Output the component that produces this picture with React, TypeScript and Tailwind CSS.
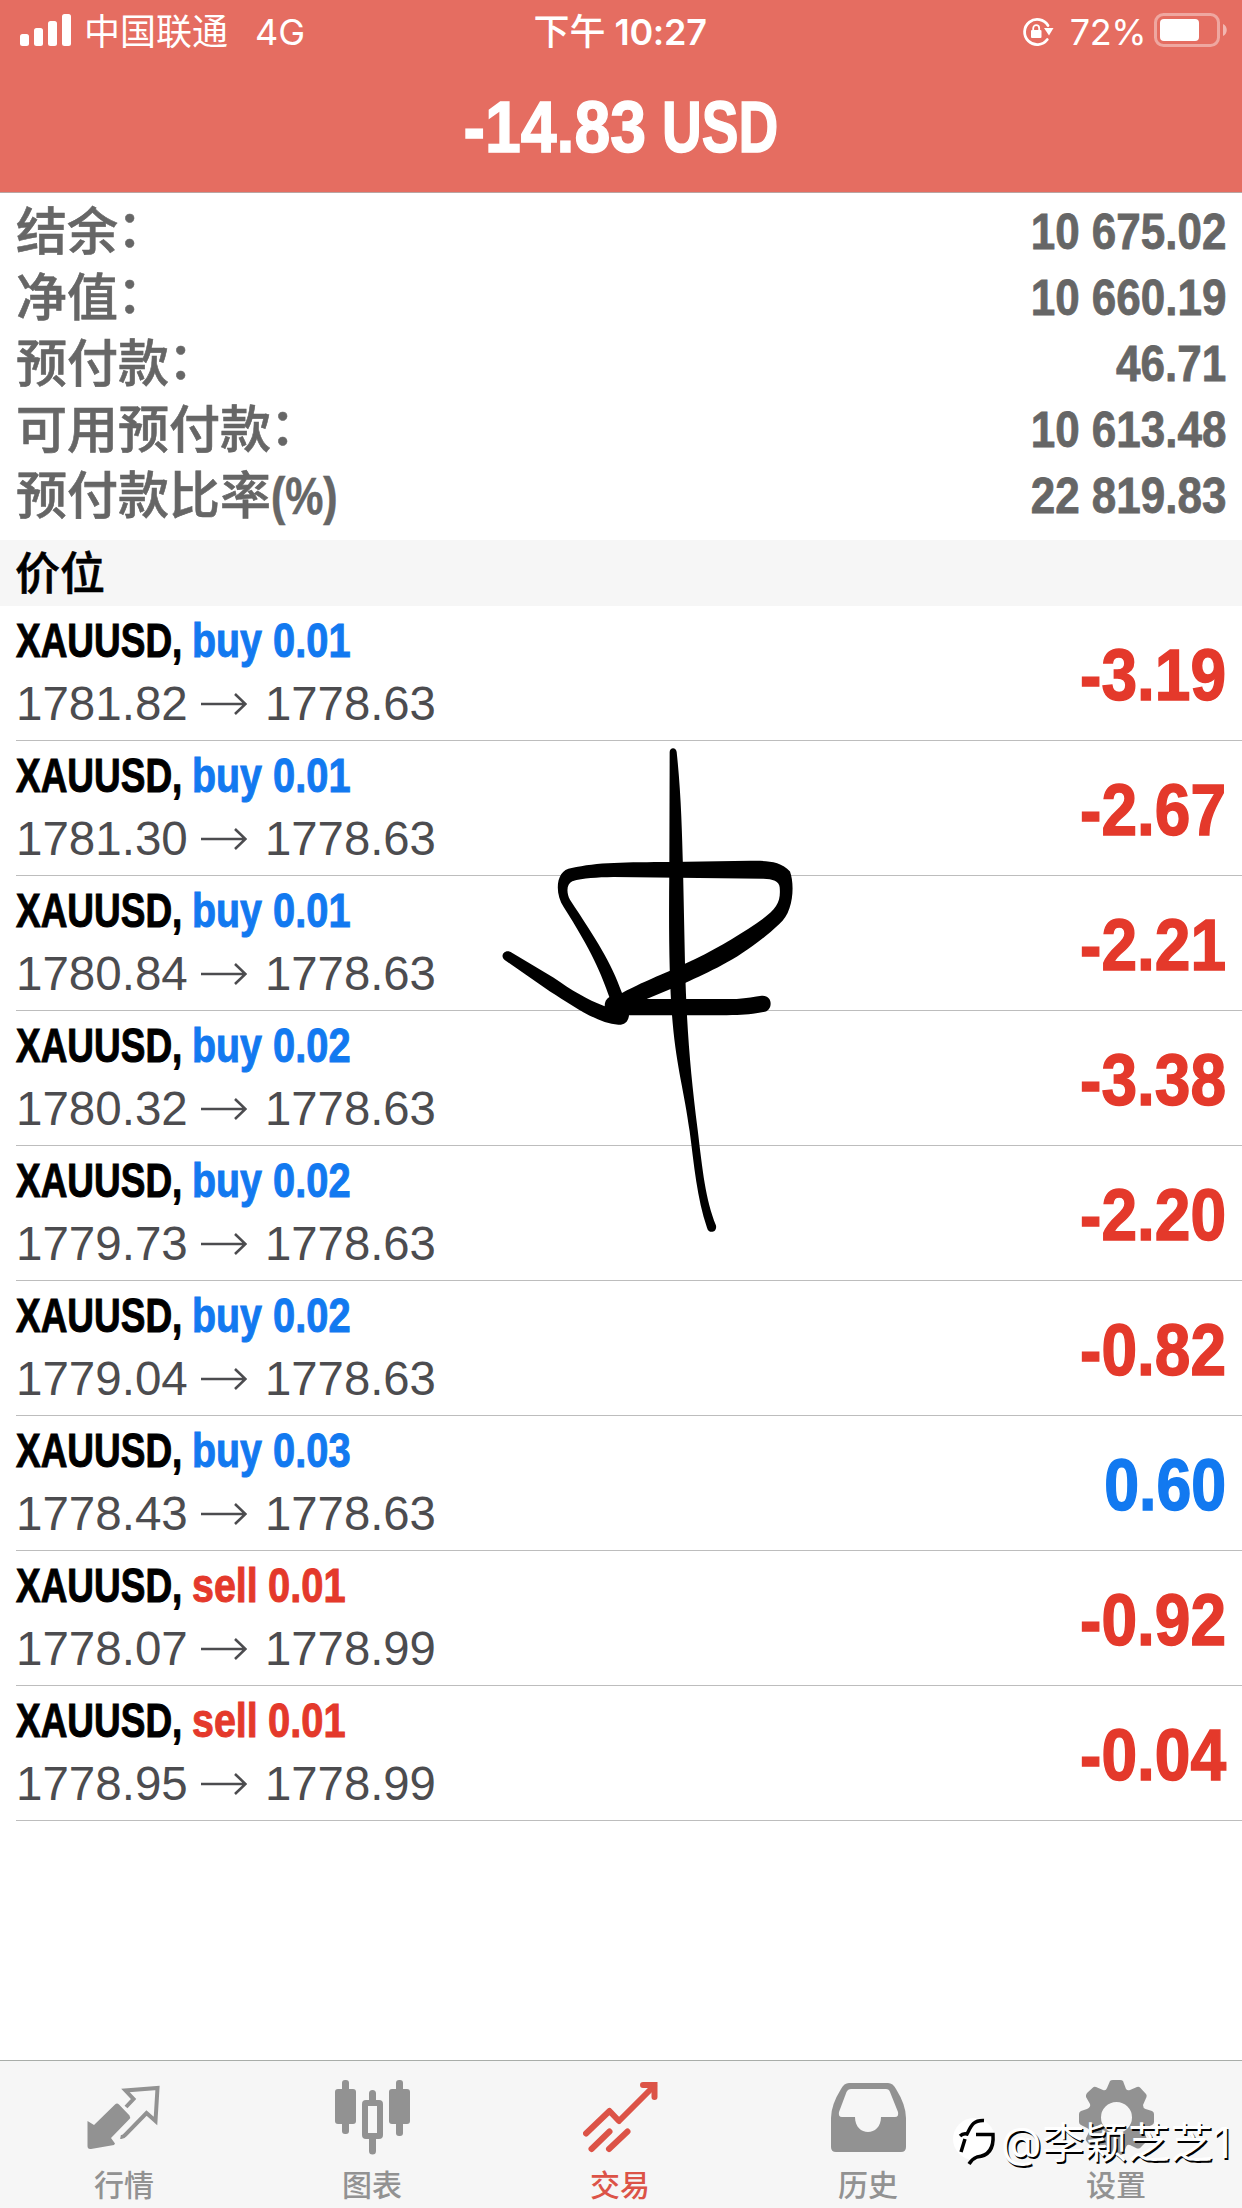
import React from 'react';

interface Position {
  side: 'buy' | 'sell';
  lots: string;
  open: string;
  current: string;
  profit: string;
}

const account = [
  { label: '结余', suffix: '：', value: '10 675.02' },
  { label: '净值', suffix: '：', value: '10 660.19' },
  { label: '预付款', suffix: '：', value: '46.71' },
  { label: '可用预付款', suffix: '：', value: '10 613.48' },
  { label: '预付款比率', suffix: '(%)', value: '22 819.83' },
];

const positions: Position[] = [
  { side: 'buy', lots: '0.01', open: '1781.82', current: '1778.63', profit: '-3.19' },
  { side: 'buy', lots: '0.01', open: '1781.30', current: '1778.63', profit: '-2.67' },
  { side: 'buy', lots: '0.01', open: '1780.84', current: '1778.63', profit: '-2.21' },
  { side: 'buy', lots: '0.02', open: '1780.32', current: '1778.63', profit: '-3.38' },
  { side: 'buy', lots: '0.02', open: '1779.73', current: '1778.63', profit: '-2.20' },
  { side: 'buy', lots: '0.02', open: '1779.04', current: '1778.63', profit: '-0.82' },
  { side: 'buy', lots: '0.03', open: '1778.43', current: '1778.63', profit: '0.60' },
  { side: 'sell', lots: '0.01', open: '1778.07', current: '1778.99', profit: '-0.92' },
  { side: 'sell', lots: '0.01', open: '1778.95', current: '1778.99', profit: '-0.04' },
];

const StatusBar = () => (
  <div className="h-16 flex items-center justify-between pl-5 pr-[14px] font-['Inter','Noto_Sans_CJK_SC',sans-serif] text-[36px] leading-none">
    <div className="flex-1 flex items-center">
      <svg className="-mt-1" width="51" height="33" viewBox="0 0 51 33" fill="white">
        <rect x="0" y="20" width="9" height="12" rx="2.5" />
        <rect x="14" y="14" width="9" height="18" rx="2.5" />
        <rect x="28" y="7" width="9" height="25" rx="2.5" />
        <rect x="42" y="0" width="9" height="32" rx="2.5" />
      </svg>
      <span className="ml-[13px] font-normal">中国联通</span>
      <span className="ml-[27px]">4G</span>
    </div>
    <div className="mr-2 flex items-center font-medium">
      下午<span className="ml-[9px] font-semibold tracking-[-0.3px]">10:27</span>
    </div>
    <div className="flex-1 flex items-center justify-end">
      <svg width="32" height="30" viewBox="0 0 32 30" fill="none" stroke="white" strokeWidth="2.8">
        <path d="M26 8.5A12.6 12.6 0 1 0 25.3 22.5" strokeLinecap="round" />
        <path d="M22 11h9.5L27 18.5z" fill="white" stroke="none" />
        <rect x="9" y="13" width="10.5" height="8" rx="1" fill="white" stroke="none" />
        <path d="M11.2 14v-2.800a3 3 0 0 1 6 0V14" strokeWidth="1.8" />
      </svg>
      <span className="ml-4 tracking-[-0.5px]">72%</span>
      <svg className="-mt-1 ml-2" width="74" height="34" viewBox="0 0 74 34">
        <rect x="1.500" y="1.500" width="63" height="31" rx="8" fill="none" stroke="white" strokeOpacity=".4" strokeWidth="3" />
        <rect x="6" y="6" width="39" height="22" rx="4" fill="white" />
        <path d="M69 11c5 2 5 10 0 12z" fill="white" fillOpacity=".5" />
      </svg>
    </div>
  </div>
);

const PositionRow = ({ position }: { position: Position }) => (
  <div className="ml-4 h-[135px] pr-4 border-b border-[#bdbdbd] flex items-center justify-between">
    <div className="flex flex-col">
      <div className="-mt-px flex text-[48px] leading-[62px] font-bold">
        <div className="w-[176px] whitespace-nowrap">
          <span className="inline-block origin-left scale-x-[.77] [-webkit-text-stroke:1px_currentColor]">XAUUSD,</span>
        </div>
        <div className={position.side === 'buy' ? 'flex text-[#1279f0]' : 'flex text-[#e4392b]'}>
          <div className={position.side === 'buy' ? 'w-[81px]' : 'w-[76px]'}>
            <span className="inline-block origin-left scale-x-[.82] [-webkit-text-stroke:1px_currentColor]">{position.side}</span>
          </div>
          <span className="inline-block origin-left scale-x-[.83] [-webkit-text-stroke:1px_currentColor]">{position.lots}</span>
        </div>
      </div>
      <div className="mt-px flex items-center text-[48px] leading-[62px] text-[#4c4c4f]">
        <span className="origin-left scale-x-[.99]">{position.open}</span>
        <svg className="ml-[11px] mr-[18px]" width="46" height="22" viewBox="0 0 46 22" fill="none" stroke="currentColor" strokeWidth="2.600">
          <path d="M0 11H44M34 1L44.500 11L34 21" />
        </svg>
        <span className="origin-left scale-x-[.985]">{position.current}</span>
      </div>
    </div>
    <span
      className={
        position.profit.startsWith('-')
          ? 'mt-[4px] origin-right scale-x-[.89] text-[72px] leading-none font-bold text-[#e4392b] [-webkit-text-stroke:1.5px_currentColor]'
          : 'mt-[4px] origin-right scale-x-[.87] text-[72px] leading-none font-bold text-[#1279f0] [-webkit-text-stroke:1.5px_currentColor]'
      }
    >
      {position.profit}
    </span>
  </div>
);

// Freehand mark over the list
const Scribble = () => (
  <svg className="absolute left-[480px] top-[720px]" width="340" height="540" viewBox="0 0 1020 1568" preserveAspectRatio="none">
    <path d="M569 93C569 78 589 78 590 93C603 210 606 320 609 430L615 710C620 900 632 1030 653 1190C668 1310 676 1390 708 1468C712 1488 686 1494 681 1474C651 1390 642 1290 629 1195C613 1080 590 1010 578 880C567 760 566 600 568 430Z" />
    <path d="M388 804C365 740 335 670 251 543C222 500 228 435 275 430C350 412 440 413 570 412L810 409C850 409 900 406 930 440C945 480 940 560 898 592C790 690 700 725 615 764L500 810H770C800 809 825 803 845 801C880 798 880 845 850 848C800 856 790 857 740 857H447C445 879 430 886 415 885C350 880 280 830 210 788L74 697C58 684 75 665 92 674L220 748C275 785 320 812 374 831C374 818 378 810 388 804ZM426 793C510 750 555 737 615 708C700 670 760 635 830 590C890 550 903 530 899 486C898 469 878 461 850 461L400 456C350 457 310 459 277 468C260 475 258 500 270 522C350 640 392 700 426 793Z" fillRule="evenodd" />
  </svg>
);

const QuotesIcon = () => (
  <svg width="75" height="75" viewBox="0 0 75 75" fill="currentColor">
    <path d="M.5 41L7 45L28 24.500Q30 22.500 32 24.500L42.500 35.500Q44 37.500 42 39.500L24 58L28 63.500L27 65L4 69Q.5 69.500 .5 66Z" />
    <path d="M39 27L46.500 19L38.500 10.500L70.500 8L68.500 41L59.500 33L38 55Q36 57.500 33.500 57" fill="none" stroke="currentColor" strokeWidth="4" />
  </svg>
);

const ChartIcon = () => (
  <svg width="75" height="75" viewBox="0 0 75 75" fill="currentColor">
    <rect x="0" y="9" width="21" height="35" rx="3" />
    <rect x="7" y="0" width="7" height="54" rx="3" />
    <rect x="54" y="9" width="21" height="35" rx="3" />
    <rect x="61" y="0" width="7" height="56" rx="3" />
    <rect x="30" y="23" width="15" height="33" rx="1" fill="none" stroke="currentColor" strokeWidth="6" />
    <path d="M34 22V13.500a3.500 3.500 0 0 1 7 0V22zM34 57V71a3.500 3.500 0 0 0 7 0V57z" />
  </svg>
);

const TradeIcon = () => (
  <svg width="75" height="75" viewBox="0 0 75 75" fill="none" stroke="currentColor" strokeWidth="6" strokeLinecap="round">
    <path d="M3 53.500L26.500 31L36 41L71 6" strokeLinejoin="round" />
    <path d="M60 5H71.500V17" />
    <path d="M8.500 69L26.500 51.500M26 69L44.500 51.500" />
  </svg>
);

const HistoryIcon = () => (
  <svg width="75" height="75" viewBox="0 0 75 75" fill="currentColor">
    <path fillRule="evenodd" d="M10 9Q13 3 18 3H57Q62 3 65 9Q75 25 75 38V67Q75 72 70 72H5Q0 72 0 67V38Q0 25 10 9ZM20 9Q17 9 15.500 12L8 32Q7 37 11 37H24C24 57 50 57 50 37H64Q68 37 67 32L59 12Q58 9 55 9Z" />
  </svg>
);

const SettingsIcon = () => (
  <svg width="75" height="75" viewBox="0 0 75 75" fill="currentColor">
    <path fillRule="evenodd" d="M31 1Q32 0 34 0H41Q43 0 44 1L47 9Q48.500 11 51 10L58 7Q60 6.500 61 7.500L67 14Q68 15 67.500 17L64 25Q64 28 66.500 29L73 31Q75 32 75 34V42Q75 44 73 45L66 48Q64 49 65 52L68 59Q68 61 67 62L61 68Q59 69 57 68L51 65Q48 64 47 67L44 74Q43 75 41 75H34Q32 75 31 74L28 67Q27 64 24 65L17 68Q15 69 13 67L8 62Q6 60 7 58L10 52Q11 49 8 48L2 45Q0 44 0 42V34Q0 32 2 31L8 29Q12 27 11 24L7 17Q6.500 15 8 13L14 7.500Q15 6.500 17 7L24 10Q27 11 28 8ZM37.500 22A15.500 15.500 0 1 0 37.500 53A15.500 15.500 0 1 0 37.500 22Z" />
  </svg>
);

const tabs = [
  { label: '行情', icon: <QuotesIcon /> },
  { label: '图表', icon: <ChartIcon /> },
  { label: '交易', icon: <TradeIcon />, active: true },
  { label: '历史', icon: <HistoryIcon /> },
  { label: '设置', icon: <SettingsIcon /> },
];

const Watermark = () => (
  <div className="absolute left-[952px] bottom-[39px] flex items-center text-white whitespace-nowrap">
    <svg width="46" height="52" viewBox="0 0 46 52">
      <circle cx="22" cy="22" r="21" fill="white" />
      <g fill="none" stroke="black" strokeWidth="3.5">
        <path d="M32 3.500C21 3 19 9 15 17Q11 16 8 19M13 22L9 35" />
        <path d="M24 17.500H41C42 32 36 39 25 40Q20 42 17 47" />
      </g>
    </svg>
    <span className="ml-[3px] font-['Inter','Noto_Sans_CJK_SC',sans-serif] text-[42px] leading-[52px] tracking-[.8px] [text-shadow:1.5px_1.5px_0_black]">@李颖芝芝1</span>
  </div>
);

export default function App() {
  return (
    <div className="relative w-[1242px] h-[2208px] overflow-hidden bg-white flex flex-col font-['Liberation_Sans','Noto_Sans_CJK_SC',sans-serif]">
      <header className="h-[193px] shrink-0 bg-[#e56d61] border-b border-[#b9a5a3] text-white">
        <StatusBar />
        <h1 className="flex justify-center gap-[15px] text-[72px] leading-[127px] font-bold [-webkit-text-stroke:1.5px_currentColor]">
          <span className="w-[181px] flex justify-end"><span className="origin-right scale-x-[.895]">-14.83</span></span>
          <span className="w-[115px]"><span className="inline-block origin-left scale-x-[.765]">USD</span></span>
        </h1>
      </header>

      <section className="h-[347px] shrink-0 px-4 pt-[5px] text-[#666]">
        {account.map((row) => (
          <div key={row.value} className="h-[66px] flex items-center justify-between font-bold">
            <span className="mt-[2px] text-[51px] leading-none flex font-medium [-webkit-text-stroke:.6px_currentColor]">
              {row.label}
              <span className={row.suffix === '(%)' ? 'font-bold origin-left scale-x-[.84]' : '-ml-px mt-[-3px]'}>{row.suffix}</span>
            </span>
            <span className="mt-[2px] origin-right scale-x-[.88] text-[50px] leading-none [-webkit-text-stroke:.8px_currentColor]">{row.value}</span>
          </div>
        ))}
      </section>

      <div className="h-[66px] shrink-0 px-[15px] pt-[2px] flex items-center bg-[#f6f6f6] text-[45px] leading-none font-medium text-black [-webkit-text-stroke:.6px_currentColor]">价位</div>

      <main className="flex-1">
        {positions.map((position, idx) => (
          <PositionRow key={idx} position={position} />
        ))}
      </main>

      <nav className="h-[148px] shrink-0 flex pr-[2px] bg-[#f6f6f6] border-t border-[#a9ada9]">
        {tabs.map((tab) => (
          <div key={tab.label} className={tab.active ? 'flex-1 flex flex-col items-center pt-[19px] text-[#dc5347]' : 'flex-1 flex flex-col items-center pt-[19px] text-[#929292]'}>
            {tab.icon}
            <span className="mt-[16px] text-[30px] leading-[30px] font-medium">{tab.label}</span>
          </div>
        ))}
      </nav>

      <Scribble />
      <Watermark />
    </div>
  );
}
